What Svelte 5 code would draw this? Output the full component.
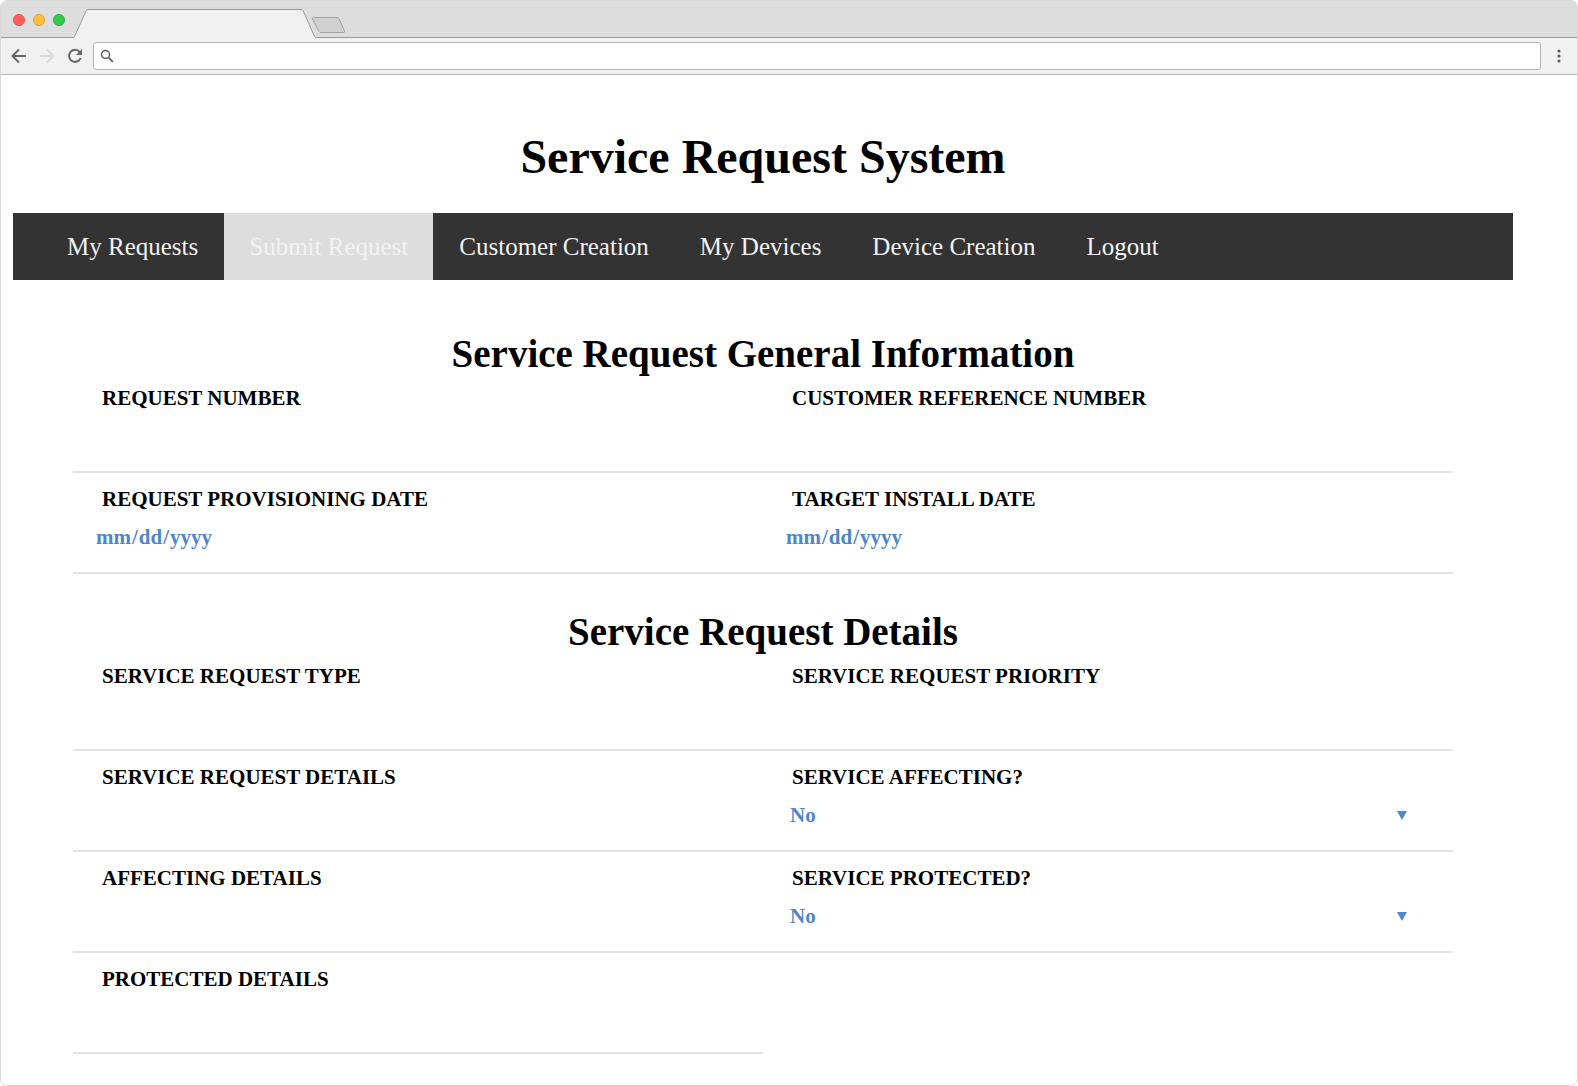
<script lang="ts">
  type Field = { id: string; label: string; kind: 'text' | 'date' | 'select' };

  const links = ['My Requests', 'Submit Request', 'Customer Creation', 'My Devices', 'Device Creation', 'Logout'];
  let current = $state('Submit Request');

  const sections: { title: string; fields: Field[] }[] = [
    {
      title: 'Service Request General Information',
      fields: [
        { id: 'request-number', label: 'REQUEST NUMBER', kind: 'text' },
        { id: 'customer-reference', label: 'CUSTOMER REFERENCE NUMBER', kind: 'text' },
        { id: 'provisioning-date', label: 'REQUEST PROVISIONING DATE', kind: 'date' },
        { id: 'install-date', label: 'TARGET INSTALL DATE', kind: 'date' }
      ]
    },
    {
      title: 'Service Request Details',
      fields: [
        { id: 'request-type', label: 'SERVICE REQUEST TYPE', kind: 'text' },
        { id: 'request-priority', label: 'SERVICE REQUEST PRIORITY', kind: 'text' },
        { id: 'request-details', label: 'SERVICE REQUEST DETAILS', kind: 'text' },
        { id: 'service-affecting', label: 'SERVICE AFFECTING?', kind: 'select' },
        { id: 'affecting-details', label: 'AFFECTING DETAILS', kind: 'text' },
        { id: 'service-protected', label: 'SERVICE PROTECTED?', kind: 'select' },
        { id: 'protected-details', label: 'PROTECTED DETAILS', kind: 'text' }
      ]
    }
  ];
</script>

<div class="window">
  <header class="browser">
    <div class="tabs">
      <div class="lights">
        <span class="light close"></span>
        <span class="light minimise"></span>
        <span class="light maximise"></span>
      </div>
      <svg class="tab" width="274" height="29" viewBox="0 0 274 29" aria-hidden="true">
        <path d="M0 29V28.5L1 28L13 2Q13.600 .5 15 .5H228Q229.500 .5 230 1.500L242 28L243 29Z" fill="#f1f1f1" />
        <path d="M0 28.500Q1 28.500 1.500 27.500L13 2Q13.600 .5 15 .5H228Q229.500 .5 230 1.500L241.500 27.500Q242 28.500 243 28.500H274" fill="none" stroke="#999" />
        <path d="M240.500 8.500H264Q265.500 8.500 266 9.500L271.500 22Q272 23.500 270.500 23.500H248Q246.500 23.500 246 22.500L239.500 10Q239 8.500 240.500 8.500Z" fill="#d0d0d0" stroke="#a3a3a3" />
      </svg>
    </div>
    <div class="toolbar">
      <button class="tool" aria-label="Back">
        <svg width="16" height="16" viewBox="0 0 16 16"><path d="M15 8H2M8 1.500L1.500 8L8 14.500" fill="none" stroke="#666" stroke-width="2" /></svg>
      </button>
      <button class="tool" aria-label="Forward">
        <svg width="16" height="16" viewBox="0 0 16 16"><path d="M1 8H14M8 1.500L14.500 8L8 14.500" fill="none" stroke="#d8d8d8" stroke-width="2" /></svg>
      </button>
      <button class="tool" aria-label="Reload">
        <svg width="16" height="16" viewBox="0 0 16 16">
          <path d="M12.700 4A6 6 0 1 0 13.700 10" fill="none" stroke="#666" stroke-width="2" />
          <path d="M15 1V7H9Z" fill="#666" />
        </svg>
      </button>
      <div class="address">
        <svg width="14" height="14" viewBox="0 0 14 14" aria-hidden="true">
          <circle cx="5.500" cy="5.500" r="4" fill="none" stroke="#5a5a5a" stroke-width="1.400" />
          <path d="M8.500 8.500L12.800 12.800" stroke="#5a5a5a" stroke-width="1.700" />
        </svg>
        <input type="text" aria-label="Address" />
      </div>
      <button class="menu" aria-label="Menu">
        <svg width="4" height="14" viewBox="0 0 4 14"><circle cx="2" cy="2" r="1.600" fill="#5a5a5a" /><circle cx="2" cy="7" r="1.600" fill="#5a5a5a" /><circle cx="2" cy="12" r="1.600" fill="#5a5a5a" /></svg>
      </button>
    </div>
  </header>

  <main>
    <h1>Service Request System</h1>
    <nav>
      {#each links as link}
        <a href="#top" class:current={link === current} onclick={() => (current = link)}>{link}</a>
      {/each}
    </nav>
    <form>
      {#each sections as section}
        <section>
          <h2>{section.title}</h2>
          <div class="grid">
            {#each section.fields as field}
              <div class="field">
                <label for={field.id}>{field.label}</label>
                {#if field.kind === 'select'}
                  <div class="select">
                    <select id={field.id}>
                      <option>No</option>
                      <option>Yes</option>
                    </select>
                    <svg width="10" height="9" viewBox="0 0 10 9" aria-hidden="true"><path d="M0 0H10L5 9Z" fill="#4e86c8" /></svg>
                  </div>
                {:else}
                  <input id={field.id} type={field.kind} />
                {/if}
              </div>
            {/each}
          </div>
        </section>
      {/each}
    </form>
  </main>
</div>

<style>
  :global(body) {
    margin: 0;
    background: #fff;
  }
  .window {
    box-sizing: border-box;
    min-height: 100vh;
    border: 1px solid #d8d8d8;
    border-radius: 7px;
    overflow: hidden;
    background: #fff;
    font-family: "Liberation Serif", "Times New Roman", serif;
    color: #000;
  }
  .tabs {
    display: flex;
    align-items: flex-end;
    height: 37px;
    background: linear-gradient(#999, #999) bottom / 100% 1px no-repeat #ddd;
  }
  .lights {
    display: flex;
    align-self: center;
    gap: 8px;
    width: 60px;
    padding-left: 12px;
  }
  .light {
    box-sizing: border-box;
    width: 12px;
    height: 12px;
    border: 1px solid;
    border-radius: 50%;
  }
  .close {
    background: #ff5f5a;
    border-color: #e3504b;
  }
  .minimise {
    background: #ffbe3c;
    border-color: #e0a136;
  }
  .maximise {
    background: #30cb49;
    border-color: #27ae3c;
  }
  .tab {
    display: block;
  }
  button {
    display: flex;
    padding: 0;
    border: 0;
    background: none;
  }
  .toolbar {
    display: flex;
    align-items: center;
    gap: 12px;
    height: 36px;
    padding: 0 16px 0 10px;
    background: #f1f1f1;
    border-bottom: 1px solid #b5b5b5;
  }
  .address {
    display: flex;
    align-items: center;
    gap: 6px;
    box-sizing: border-box;
    flex: 1;
    height: 28px;
    margin: 0 4px 0 -2px;
    padding: 0 8px 0 6px;
    border: 1px solid #b3b3b3;
    border-radius: 3px;
    background: #fff;
  }
  .address input {
    flex: 1;
    border: 0;
    outline: 0;
    font: 14px "Liberation Sans", sans-serif;
  }
  main {
    padding: 50px 64px 16px 12px;
  }
  h1 {
    margin: 0;
    padding: 4px 0 29px;
    font-size: 48px;
    line-height: 55px;
    text-align: center;
  }
  nav {
    display: flex;
    gap: 1px;
    padding-left: 29px;
    background: #333;
  }
  nav a {
    padding: 0 25px;
    font-size: 25px;
    line-height: 67px;
    color: #f2f2f2;
    text-decoration: none;
  }
  nav a.current {
    background: #ddd;
  }
  form {
    padding: 51px 60px 0;
  }
  section + section {
    margin-top: 35px;
  }
  h2 {
    margin: 0;
    font-size: 39px;
    line-height: 45px;
    text-align: center;
  }
  .grid {
    display: grid;
    grid-template-columns: 1fr 1fr;
    margin-top: -4px;
  }
  .field {
    display: flex;
    flex-direction: column;
    box-sizing: border-box;
    height: 101px;
    padding: 14px 40px 0 20px;
    border-bottom: 2px solid #e3e3e3;
  }
  label {
    padding-left: 9px;
    font-size: 21px;
    line-height: 24px;
    font-weight: bold;
  }
  .field input,
  select {
    box-sizing: border-box;
    width: 100%;
    height: 30px;
    margin-top: 11px;
    padding: 0 2px;
    border: 0;
    outline: 0;
    background: none;
    font: bold 21px "Liberation Serif", "Times New Roman", serif;
    color: #4e86c8;
  }
  .field input::-webkit-calendar-picker-indicator {
    display: none;
  }
  .select {
    display: grid;
    align-items: center;
  }
  .select > * {
    grid-area: 1 / 1;
  }
  select {
    appearance: none;
    padding: 0 7px;
  }
  .select svg {
    justify-self: end;
    margin: 11px 6px 0 0;
    pointer-events: none;
  }
</style>
